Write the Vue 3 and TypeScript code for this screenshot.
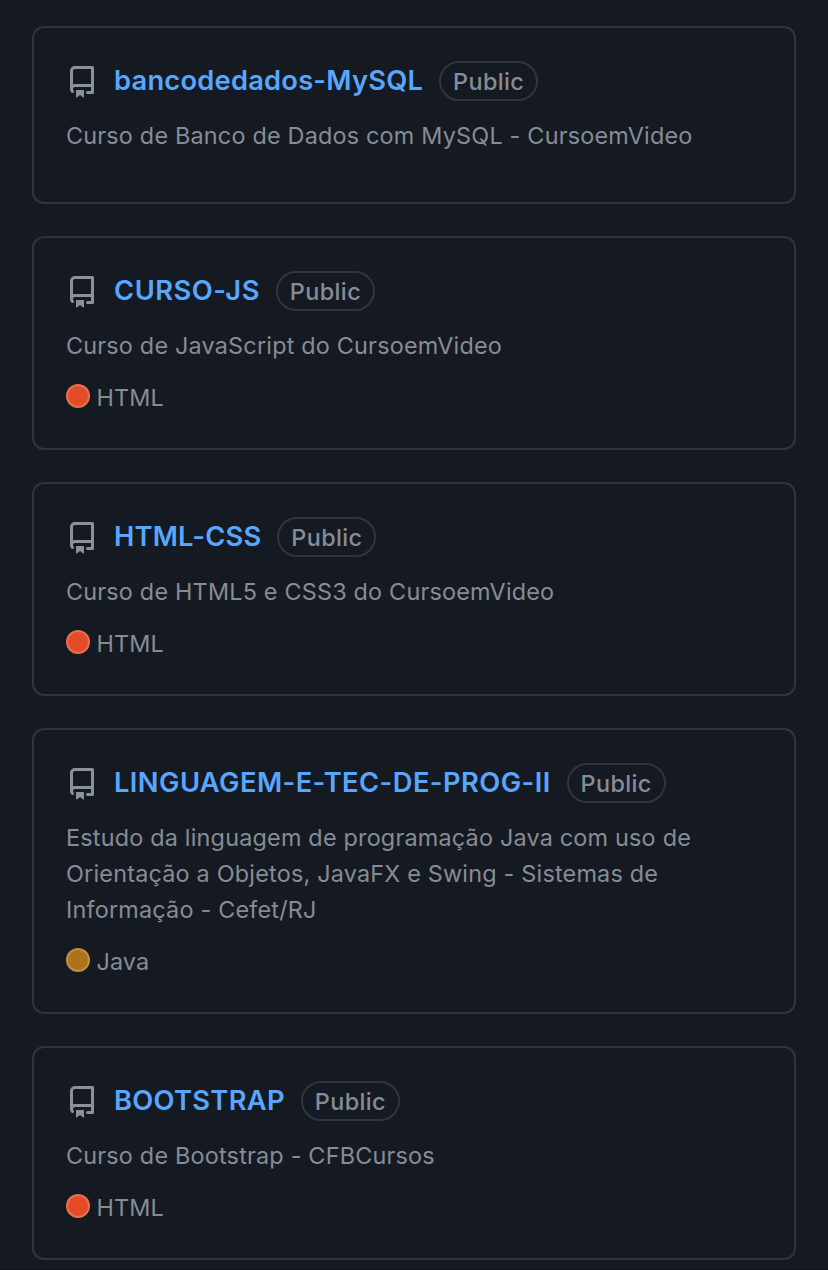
<script setup lang="ts">
interface Repo {
  name: string
  tracking: number
  description: string
  language?: 'HTML' | 'Java'
}

const repos: Repo[] = [
  {
    name: 'bancodedados-MySQL',
    tracking: 0.22,
    description: 'Curso de Banco de Dados com MySQL - CursoemVideo',
  },
  { name: 'CURSO-JS', tracking: 0.52, description: 'Curso de JavaScript do CursoemVideo', language: 'HTML' },
  { name: 'HTML-CSS', tracking: 0.18, description: 'Curso de HTML5 e CSS3 do CursoemVideo', language: 'HTML' },
  {
    name: 'LINGUAGEM-E-TEC-DE-PROG-II',
    tracking: 0.43,
    description:
      'Estudo da linguagem de programação Java com uso de Orientação a Objetos, JavaFX e Swing - Sistemas de Informação - Cefet/RJ',
    language: 'Java',
  },
  { name: 'BOOTSTRAP', tracking: 0.3, description: 'Curso de Bootstrap - CFBCursos', language: 'HTML' },
]
</script>

<template>
  <main class="page">
    <article v-for="repo in repos" :key="repo.name" class="card">
      <header class="head">
        <svg class="icon" viewBox="0 0 16 16" width="32" height="32" aria-hidden="true">
          <path
            fill-rule="evenodd"
            d="M2 2.5A2.5 2.5 0 014.5 0h8.75a.75.75 0 01.75.75v12.5a.75.75 0 01-.75.75h-2.5a.75.75 0 110-1.5h1.75v-2h-8a1 1 0 00-.714 1.7.75.75 0 01-1.072 1.05A2.495 2.495 0 012 11.5v-9zm10.5-1V9h-8c-.356 0-.694.074-1 .208V2.5a1 1 0 011-1h8zM5 12.25v3.25a.25.25 0 00.4.2l1.45-1.087a.25.25 0 01.3 0L8.6 15.7a.25.25 0 00.4-.2v-3.25a.25.25 0 00-.25-.25h-3.5a.25.25 0 00-.25.25z"
          />
        </svg>
        <a class="name" :style="{ letterSpacing: `${repo.tracking}px` }">{{ repo.name }}</a>
        <span class="badge">Public</span>
      </header>
      <p class="description">{{ repo.description }}</p>
      <div v-if="repo.language" class="language">
        <span class="dot" :class="repo.language.toLowerCase()"></span>
        <span>{{ repo.language }}</span>
      </div>
    </article>
  </main>
</template>

<style>
body {
  margin: 0;
  background: #151a22;
}
</style>

<style scoped>
.page {
  box-sizing: border-box;
  height: 1270px;
  padding: 26px 32px 0;
  display: flex;
  flex-direction: column;
  gap: 32px;
  overflow: hidden;
  background: #151a22;
  border-bottom: 1px solid #0b0e14;
  color: #868c95;
  font-family: Inter, 'Liberation Sans', sans-serif;
  font-size: 23.4px;
  letter-spacing: 0.2px;
  line-height: 36px;
}
.card {
  flex: none;
  box-sizing: border-box;
  padding: 32px;
  border: 2px solid #30353d;
  border-radius: 12px;
}
.head {
  display: flex;
  align-items: center;
  height: 42px;
}
.icon {
  flex: none;
  margin: 2px 16px 0 0;
  fill: #8b919b;
}
.name {
  color: #58a6ff;
  font-size: 27.3px;
  font-weight: 600;
  line-height: 42px;
  white-space: nowrap;
}
.badge {
  box-sizing: border-box;
  width: 99px;
  height: 40px;
  margin-left: 16px;
  border: 2px solid #30353d;
  border-radius: 20px;
  font-weight: 500;
  letter-spacing: 0.4px;
  line-height: 38px;
  text-align: center;
}
.description {
  margin: 16px 0;
}
.language {
  display: flex;
  align-items: center;
  gap: 6.5px;
  letter-spacing: 0.1px;
}
.dot {
  box-sizing: border-box;
  width: 24px;
  height: 24px;
  margin-top: -4px;
  border: 2px solid rgba(255, 255, 255, 0.2);
  border-radius: 50%;
}
.html {
  background: #e34c26;
}
.java {
  background: #b07219;
}
</style>
